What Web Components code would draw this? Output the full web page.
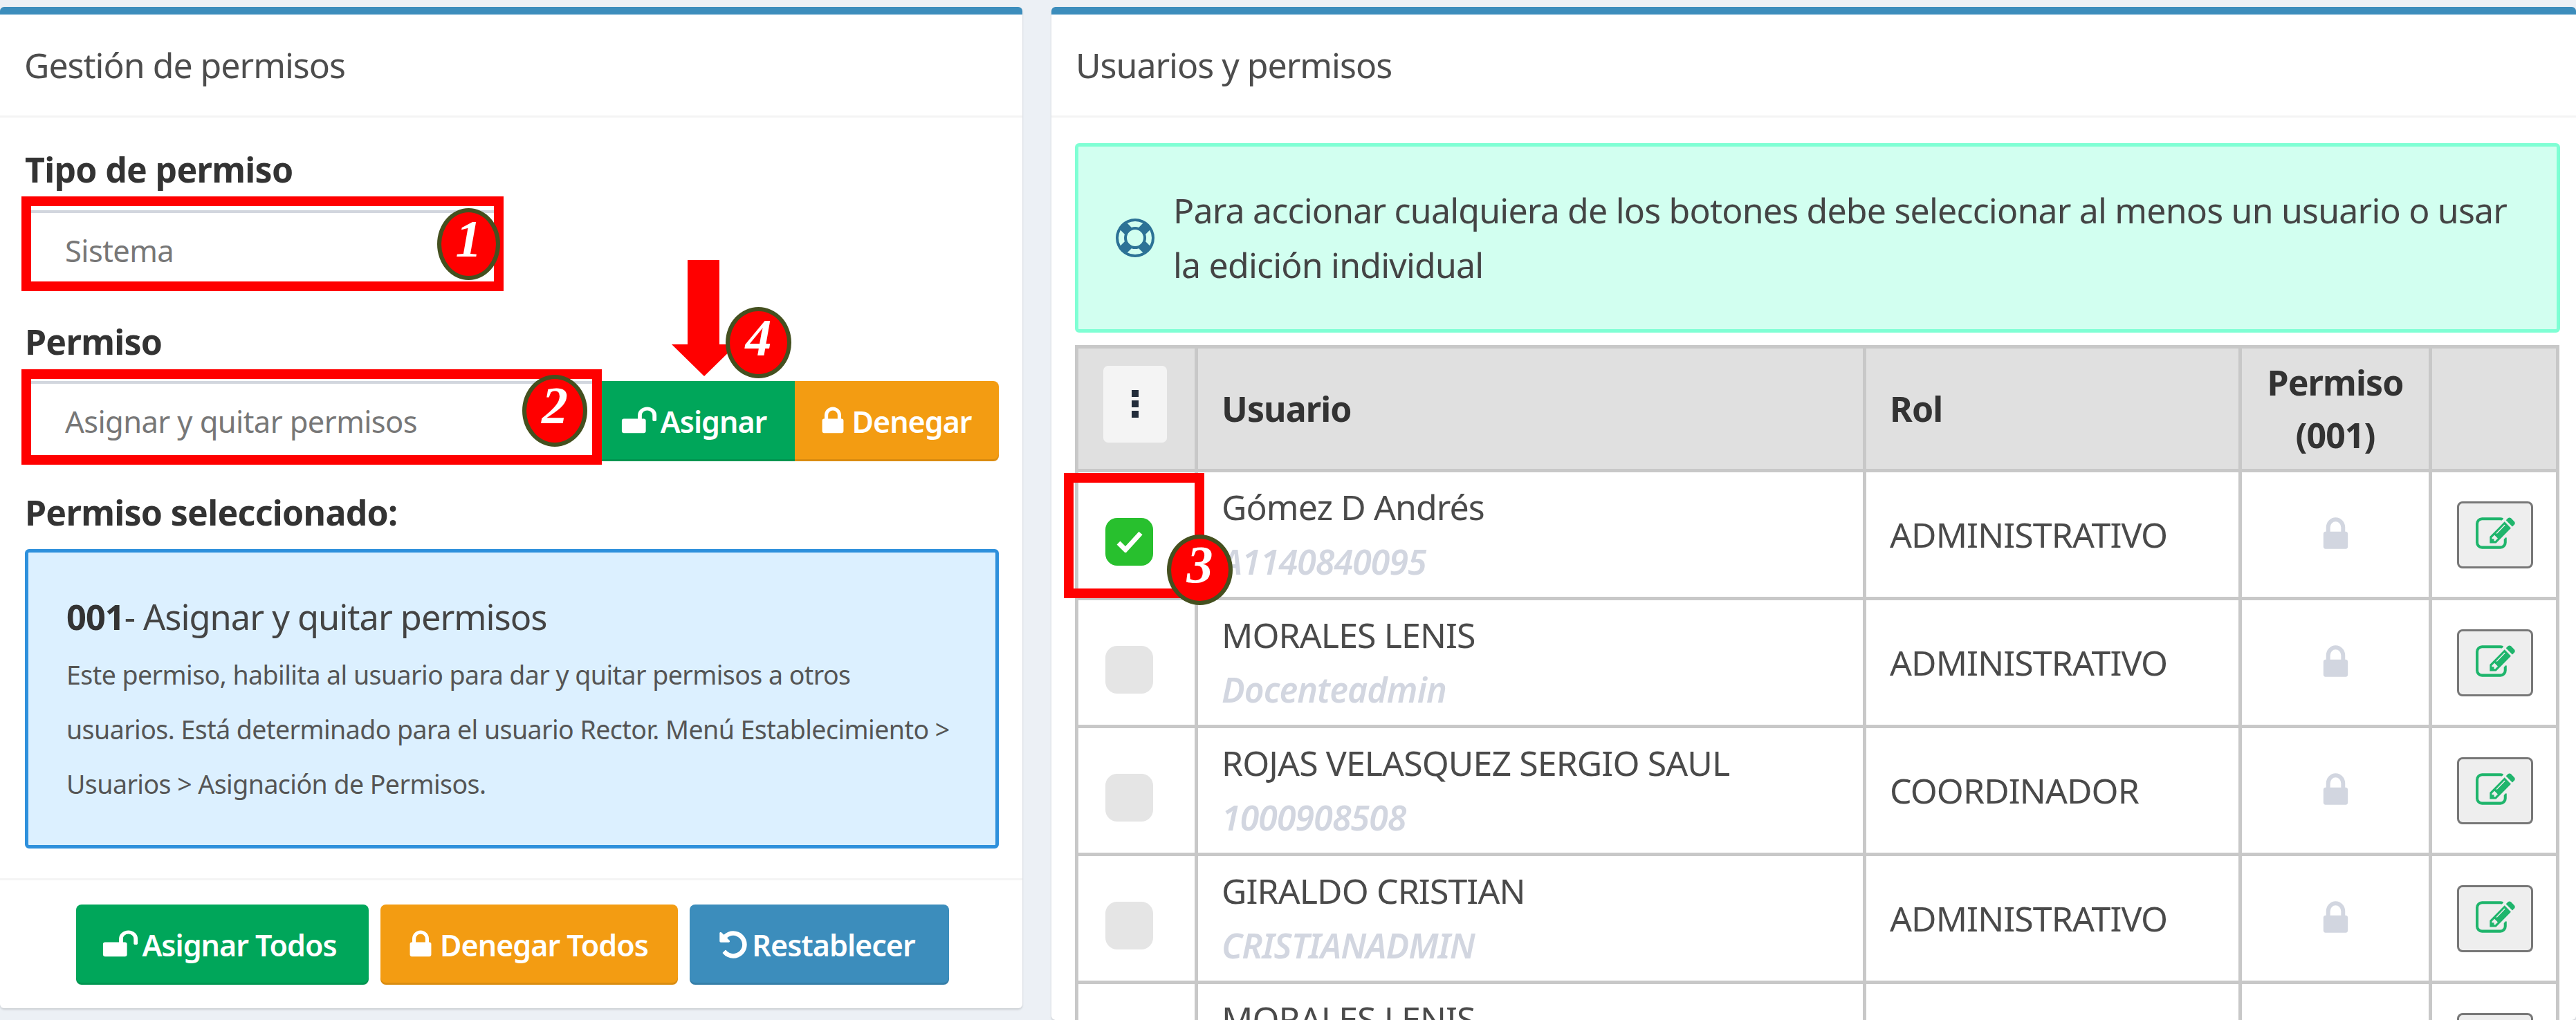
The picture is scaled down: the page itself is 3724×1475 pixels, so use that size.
<!DOCTYPE html>
<html lang="es">
<head>
<meta charset="UTF-8">
<title>Usuarios y permisos</title>
<style>
    html, body { margin: 0; height: 1475px; overflow: hidden; }
    body { background: #ecf0f5; font-family: "Noto Sans", sans-serif; color: #444; }
    #page { position: relative; display: flex; gap: 42px; padding-top: 10px; height: 1465px; }
    #left { width: 1478px; height: 1448px; flex: none; }
    #right { flex: 1; min-width: 0; --pad-left: 34px; --pad-right: 23px; }
</style>
</head>
<body>
<div id="page">
    <app-card id="left">
        <span slot="title">Gestión de permisos</span>
        <field-label style="margin-top:45px">Tipo de permiso</field-label>
        <text-input style="width:686px;margin-top:29px">Sistema</text-input>
        <field-label style="margin-top:43px">Permiso</field-label>
        <div style="display:flex;margin-top:27px">
            <text-input style="width:834px">Asignar y quitar permisos</text-input>
            <action-button icon="unlock" color="#00a65a" group="first" style="width:279px">Asignar</action-button>
            <action-button icon="lock" color="#f39c12" group="last" style="width:295px">Denegar</action-button>
        </div>
        <field-label style="margin-top:43px">Permiso seleccionado:</field-label>
        <info-box style="margin-top:23px">
            <span slot="code">001</span>
            <span slot="title">- Asignar y quitar permisos</span>
            Este permiso, habilita al usuario para dar y quitar permisos a otros usuarios. Está determinado para el usuario Rector. Menú Establecimiento &gt; Usuarios &gt; Asignación de Permisos.
        </info-box>
        <action-button slot="footer" icon="unlock" color="#00a65a" style="width:423px">Asignar Todos</action-button>
        <action-button slot="footer" icon="lock" color="#f39c12" style="width:430px">Denegar Todos</action-button>
        <action-button slot="footer" icon="undo" color="#3c8dbc" style="width:375px">Restablecer</action-button>
    </app-card>

    <app-card id="right">
        <span slot="title">Usuarios y permisos</span>
        <hint-alert>Para accionar cualquiera de los botones debe seleccionar al menos un usuario o usar la edición individual</hint-alert>
        <user-head></user-head>
        <user-row checked><span slot="name">Gómez D Andrés</span><span slot="login">A1140840095</span><span slot="rol">ADMINISTRATIVO</span></user-row>
        <user-row><span slot="name">MORALES LENIS</span><span slot="login">Docenteadmin</span><span slot="rol">ADMINISTRATIVO</span></user-row>
        <user-row><span slot="name">ROJAS VELASQUEZ SERGIO SAUL</span><span slot="login">1000908508</span><span slot="rol">COORDINADOR</span></user-row>
        <user-row><span slot="name">GIRALDO CRISTIAN</span><span slot="login">CRISTIANADMIN</span><span slot="rol">ADMINISTRATIVO</span></user-row>
        <user-row><span slot="name">MORALES LENIS</span><span slot="login">Docenteadmin</span><span slot="rol">ADMINISTRATIVO</span></user-row>
    </app-card>

    <!-- red annotations drawn over the capture -->
    <mark-box x="31" y="284" w="697" h="137"></mark-box>
    <mark-box x="31" y="534" w="839" h="138"></mark-box>
    <mark-box x="1538" y="684" w="203" h="181"></mark-box>
    <mark-arrow x="971" y="376" w="94" h="168"></mark-arrow>
    <mark-badge x="632" y="301" w="91" h="104">1</mark-badge>
    <mark-badge x="755" y="542" w="94" h="104">2</mark-badge>
    <mark-badge x="1687" y="773" w="95" h="102">3</mark-badge>
    <mark-badge x="1049" y="444" w="95" h="103">4</mark-badge>
</div>

<script>
    const ICONS = {
        lock: "M640 768h512v-192q0-106-75-181t-181-75-181 75-75 181v192zm832 96v576q0 40-28 68t-68 28h-960q-40 0-68-28t-28-68v-576q0-40 28-68t68-28h32v-192q0-184 132-316t316-132 316 132 132 316v192h32q40 0 68 28t28 68z",
        unlock: "M1728 576v256q0 26-19 45t-45 19h-64q-26 0-45-19t-19-45v-256q0-106-75-181t-181-75-181 75-75 181v192h96q40 0 68 28t28 68v576q0 40-28 68t-68 28h-960q-40 0-68-28t-28-68v-576q0-40 28-68t68-28h672v-192q0-185 131.500-316.500t316.500-131.500 316.500 131.500 131.500 316.500z",
        undo: "M1664 896q0 156-61 298t-164 245-245 164-298 61q-172 0-327-72.500t-264-204.500q-7-10-6.500-22.500t8.500-20.500l137-138q10-9 25-9 16 2 23 12 73 95 179 147t225 52q104 0 198.500-40.500t163.500-109.500 109.500-163.500 40.500-198.500-40.500-198.500-109.500-163.500-163.500-109.500-198.500-40.500q-98 0-188 35.500t-160 101.500l137 138q31 30 14 69-17 40-59 40h-448q-26 0-45-19t-19-45v-448q0-42 40-59 39-17 69 14l130 129q107-101 244.500-156.500t284.500-55.500q156 0 298 61t245 164 164 245 61 298z",
        ring: "M896 0q182 0 348 71t286 191 191 286 71 348-71 348-191 286-286 191-348 71-348-71-286-191-191-286-71-348 71-348 191-286 286-191 348-71zm0 128q-190 0-361 90l194 194q82-28 167-28t167 28l194-194q-171-90-361-90zm-678 1129l194-194q-28-82-28-167t28-167l-194-194q-90 171-90 361t90 361zm678 407q190 0 361-90l-194-194q-82 28-167 28t-167-28l-194 194q171 90 361 90zm0-384q159 0 271.500-112.500t112.500-271.500-112.500-271.500-271.500-112.500-271.500 112.500-112.500 271.500 112.500 271.500 271.500 112.500zm484-217l194 194q90-171 90-361t-90-361l-194 194q28 82 28 167t-28 167z",
        edit: "M888 1184l116-116-152-152-116 116v56h96v96h56zm440-720q-16-16-33 1l-350 350q-17 17-1 33t33-1l350-350q17-17 1-33zm80 594v190q0 119-84.500 203.500t-203.500 84.500h-832q-119 0-203.500-84.500t-84.500-203.500v-832q0-119 84.500-203.500t203.500-84.500h832q63 0 117 25 15 7 18 23 3 17-9 29l-49 49q-14 14-32 8-23-6-45-6h-832q-66 0-113 47t-47 113v832q0 66 47 113t113 47h832q66 0 113-47t47-113v-126q0-13 9-22l64-64q15-15 35-7t20 29zm-96-738l288 288-672 672h-288v-288zm444 132l-92 92-288-288 92-92q28-28 68-28t68 28l152 152q28 28 28 68t-28 68z"
    };

    function icon(name, w, h) {
        return `<svg width="${w}" height="${h}" viewBox="0 0 1792 1792" preserveAspectRatio="none" fill="currentColor" style="display:block;flex:none"><path d="${ICONS[name]}"/></svg>`;
    }

    class AppCard extends HTMLElement {
        constructor() {
            super();
            this.attachShadow({mode: "open"});
            const hasFooter = this.querySelector('[slot="footer"]');
            this.shadowRoot.innerHTML = `
                <style>
                    :host { display: flex; flex-direction: column; background: #fff; border-top: 11px solid #3c8dbc; border-radius: 6px; box-shadow: 0 2px 3px rgba(0,0,0,.15); box-sizing: border-box; overflow: hidden; }
                    header { height: 149px; flex: none; box-sizing: border-box; padding: 0 35px; border-bottom: 3px solid #f4f4f4; font-size: 50px; letter-spacing: -1px; line-height: 146px; color: #4d4d4d; }
                    main { flex: 1; padding: 0 var(--pad-right, 34px) 0 var(--pad-left, 36px); min-height: 0; }
                    footer { flex: none; height: 188px; box-sizing: border-box; border-top: 3px solid #f4f4f4; display: flex; gap: 17px; padding-top: 35px; padding-left: 110px; }
                </style>
                <header><slot name="title"></slot></header>
                <main><slot></slot></main>
                ${hasFooter ? '<footer><slot name="footer"></slot></footer>' : ''}`;
        }
    }

    class FieldLabel extends HTMLElement {
        constructor() {
            super();
            this.attachShadow({mode: "open"});
            this.shadowRoot.innerHTML = `
                <style>:host { display: block; height: 60px; line-height: 60px; font-size: 50px; font-weight: 700; letter-spacing: -.7px; color: #333; }</style>
                <slot></slot>`;
        }
    }

    class TextInput extends HTMLElement {
        constructor() {
            super();
            this.attachShadow({mode: "open"});
            this.shadowRoot.innerHTML = `
                <style>:host { display: block; flex: none; box-sizing: border-box; height: 117px; line-height: 109px; padding-left: 54px; background: #fff; border: 4px solid #d2d6de; font-size: 43.5px; letter-spacing: -.6px; color: #777; overflow: hidden; }</style>
                <slot></slot>`;
        }
    }

    class ActionButton extends HTMLElement {
        constructor() {
            super();
            this.attachShadow({mode: "open"});
            const color = this.getAttribute("color");
            const group = this.getAttribute("group");
            const radius = group === "first" ? "0" : group === "last" ? "0 8px 8px 0" : "8px";
            const name = this.getAttribute("icon");
            const size = name === "undo" ? [46, 46] : name === "lock" ? [48, 48] : [54, 48];
            this.shadowRoot.innerHTML = `
                <style>
                    :host { display: flex; flex: none; align-items: center; justify-content: center; gap: 4px; box-sizing: border-box; height: 116px; padding-right: ${group === "first" ? 14 : 9}px; color: #fff; background: ${color}; border-radius: ${radius}; box-shadow: inset 0 -3px 0 rgba(0,0,0,.1); font-size: 43px; font-weight: 600; letter-spacing: -1px; }
                </style>
                ${icon(name, size[0], size[1])}<slot></slot>`;
        }
    }

    class InfoBox extends HTMLElement {
        constructor() {
            super();
            this.attachShadow({mode: "open"});
            this.shadowRoot.innerHTML = `
                <style>
                    :host { display: block; box-sizing: border-box; height: 433px; padding: 53px 58px 0 55px; background: #dcf0ff; border: 5px solid #2e90dc; border-radius: 6px; color: #555; }
                    h4 { margin: 0 0 4px; font-size: 50.5px; line-height: 80px; font-weight: 400; letter-spacing: -1px; color: #444; white-space: nowrap; }
                    b { color: #333; }
                    p { margin: 0; font-size: 37.5px; line-height: 79px; letter-spacing: -.55px; }
                </style>
                <h4><b><slot name="code"></slot></b><slot name="title"></slot></h4>
                <p><slot></slot></p>`;
        }
    }

    class HintAlert extends HTMLElement {
        constructor() {
            super();
            this.attachShadow({mode: "open"});
            this.shadowRoot.innerHTML = `
                <style>
                    :host { display: flex; align-items: center; gap: 27px; box-sizing: border-box; height: 274px; margin-top: 37px; padding: 0 40px 0 54px; background: #d2fff0; border: 5px solid #7fffd4; border-radius: 6px; font-size: 50px; line-height: 79px; letter-spacing: -.8px; color: #444; }
                    svg { color: #2c7296; }
                </style>
                ${icon("ring", 56, 56)}<div><slot></slot></div>`;
        }
    }

    const ROW_COLUMNS = "grid-template-columns: 173px 966px 543px 275px 184px;";
    const CELL_STYLE = `.c { box-sizing: border-box; border-right: 5px solid #c8c8c8; border-bottom: 5px solid #c8c8c8; display: flex; align-items: center; min-width: 0; }`;

    class UserHead extends HTMLElement {
        constructor() {
            super();
            this.attachShadow({mode: "open"});
            this.shadowRoot.innerHTML = `
                <style>
                    :host { display: grid; ${ROW_COLUMNS} margin-top: 18px; height: 184px; border-left: 5px solid #c8c8c8; border-top: 5px solid #c8c8c8; width: 2146px; box-sizing: border-box; background: #e0e0e0; font-size: 50px; font-weight: 700; letter-spacing: -.9px; line-height: 76px; color: #333; }
                    ${CELL_STYLE}
                    .menu { width: 92px; height: 111px; margin-left: 36px; margin-top: -14px; background: #f4f4f4; border-radius: 7px; display: flex; flex-direction: column; align-items: center; justify-content: center; gap: 5px; }
                    .menu i { width: 10px; height: 10px; background: #222c3a; display: block; }
                </style>
                <div class="c"><div class="menu"><i></i><i></i><i></i></div></div>
                <div class="c" style="padding-left:34px">Usuario</div>
                <div class="c" style="padding-left:34px">Rol</div>
                <div class="c" style="justify-content:center;text-align:center">Permiso<br>(001)</div>
                <div class="c"></div>`;
        }
    }

    class UserRow extends HTMLElement {
        constructor() {
            super();
            this.attachShadow({mode: "open"});
            const checked = this.hasAttribute("checked");
            this.shadowRoot.innerHTML = `
                <style>
                    :host { display: grid; ${ROW_COLUMNS} height: 185px; border-left: 5px solid #c8c8c8; width: 2146px; box-sizing: border-box; background: #fff; font-size: 50px; letter-spacing: -.9px; line-height: 79px; color: #4a4a4a; }
                    ${CELL_STYLE}
                    .check { width: 69px; height: 69px; margin-left: 39px; margin-top: 20px; border-radius: 17px; background: ${checked ? "#28c02e" : "#e5e5e5"}; display: flex; align-items: center; justify-content: center; }
                    .login { color: #d2d6e0; font-style: italic; font-weight: 600; }
                    .lock { color: #d2d6e0; }
                    .edit { width: 110px; height: 97px; margin-left: 36px; box-sizing: border-box; border: 3px solid #777; border-radius: 8px; background: #eee; color: #1fb56c; display: flex; align-items: center; justify-content: center; }
                </style>
                <div class="c"><div class="check">${checked ? '<svg width="38" height="32" viewBox="0 0 38 32"><path d="M3 18l10 10L35 4" fill="none" stroke="#fff" stroke-width="7"/></svg>' : ''}</div></div>
                <div class="c" style="padding-left:34px"><div><div><slot name="name"></slot></div><div class="login"><slot name="login"></slot></div></div></div>
                <div class="c" style="padding-left:34px"><slot name="rol"></slot></div>
                <div class="c lock" style="justify-content:center">${icon("lock", 55, 58)}</div>
                <div class="c"><div class="edit">${icon("edit", 57, 58)}</div></div>`;
        }
    }

    // annotations sit on the capture at their own place, so they take coordinates
    function place(el) {
        for (const [attr, prop] of [["x", "left"], ["y", "top"], ["w", "width"], ["h", "height"]]) {
            el.style[prop] = el.getAttribute(attr) + "px";
        }
    }

    class MarkBox extends HTMLElement {
        constructor() {
            super();
            this.attachShadow({mode: "open"});
            this.shadowRoot.innerHTML = `<style>:host { position: absolute; box-sizing: border-box; border: 14px solid #f00; }</style>`;
            place(this);
        }
    }

    class MarkArrow extends HTMLElement {
        constructor() {
            super();
            this.attachShadow({mode: "open"});
            this.shadowRoot.innerHTML = `
                <style>:host { position: absolute; } svg { display: block; }</style>
                <svg width="94" height="168" viewBox="0 0 94 168"><path d="M23 0h46v122h25l-47 46L0 122h23z" fill="#f00"/></svg>`;
            place(this);
        }
    }

    class MarkBadge extends HTMLElement {
        constructor() {
            super();
            this.attachShadow({mode: "open"});
            this.shadowRoot.innerHTML = `
                <style>:host { position: absolute; box-sizing: border-box; display: flex; align-items: center; justify-content: center; padding-bottom: 16px; background: #f00; border: 6px solid #44501f; border-radius: 50%; color: #fff; font: italic 700 76px "Liberation Serif", serif; line-height: 80px; }</style>
                <slot></slot>`;
            place(this);
        }
    }

    customElements.define("app-card", AppCard);
    customElements.define("field-label", FieldLabel);
    customElements.define("text-input", TextInput);
    customElements.define("action-button", ActionButton);
    customElements.define("info-box", InfoBox);
    customElements.define("hint-alert", HintAlert);
    customElements.define("user-head", UserHead);
    customElements.define("user-row", UserRow);
    customElements.define("mark-box", MarkBox);
    customElements.define("mark-arrow", MarkArrow);
    customElements.define("mark-badge", MarkBadge);
</script>
</body>
</html>
